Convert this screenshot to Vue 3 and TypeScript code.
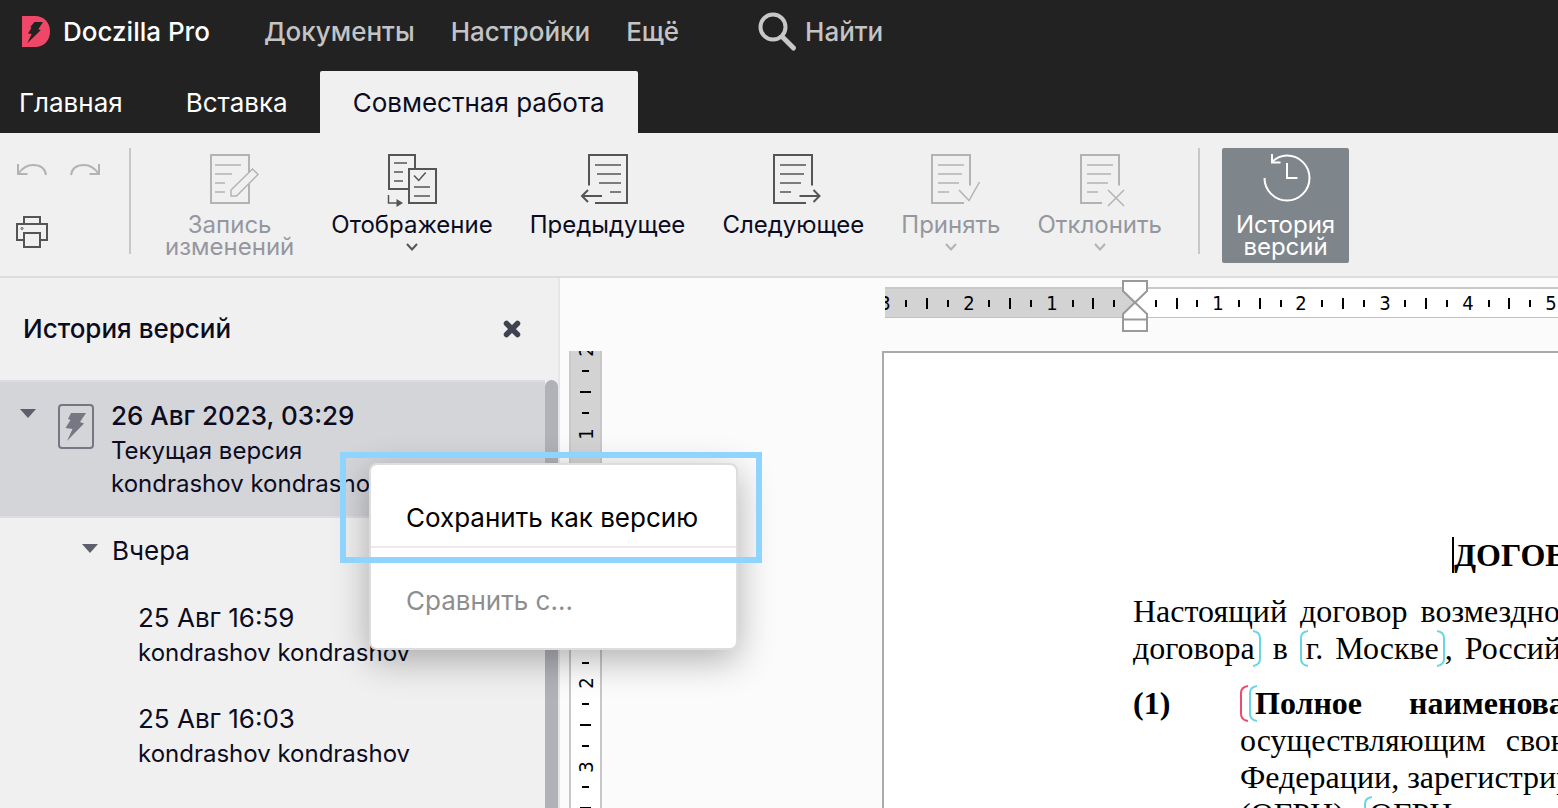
<script setup lang="ts">
import { ref } from 'vue'

interface Tool {
  id: string
  label: string[]
  disabled?: boolean
  menu?: boolean
}

interface Tick {
  pos: number
  long: boolean
}

const nav: string[] = ['Документы', 'Настройки', 'Ещё']
const tabs: string[] = ['Главная', 'Вставка', 'Совместная работа']
const activeTab = ref('Совместная работа')

const tools: Tool[] = [
  { id: 'record', label: ['Запись', 'изменений'], disabled: true },
  { id: 'display', label: ['Отображение'], menu: true },
  { id: 'prev', label: ['Предыдущее'] },
  { id: 'next', label: ['Следующее'] },
  { id: 'accept', label: ['Принять'], disabled: true, menu: true },
  { id: 'reject', label: ['Отклонить'], disabled: true, menu: true },
]

const versions = [
  { date: '25 Авг 16:59', author: 'kondrashov kondrashov' },
  { date: '25 Авг 16:03', author: 'kondrashov kondrashov' },
]

const CM = 83.2

function makeTicks(origin: number, from: number, to: number): Tick[] {
  const out: Tick[] = []
  for (let q = from * 4; q <= to * 4; q++) {
    if (q % 4 !== 0) out.push({ pos: Math.round(origin + (q * CM) / 4), long: q % 2 === 0 })
  }
  return out
}

function makeLabels(origin: number, from: number, to: number) {
  const out: { pos: number; text: string }[] = []
  for (let n = from; n <= to; n++) {
    if (n !== 0) out.push({ pos: Math.round(origin + n * CM), text: String(Math.abs(n)) })
  }
  return out
}

const hOrigin = 250
const vOrigin = 166
const hTicks = makeTicks(hOrigin, -3, 5)
const hLabels = makeLabels(hOrigin, -3, 5)
const vTicks = makeTicks(vOrigin, -2, 4)
const vLabels = makeLabels(vOrigin, -2, 3)
</script>

<template>
  <div class="app">
    <header class="top">
      <div class="top-row">
        <a class="brand" href="#">
          <svg class="logo" viewBox="0 0 28 31" aria-hidden="true">
            <path d="M0 0H13C22 0 28 6.500 28 15.500S22 31 13 31H0Z" fill="#ee4767" />
            <path d="M12.500 6H21L16.300 13.300L18.700 14.300L5.300 27.300L9.700 18L6 17.500L9.500 11.700L8.300 11Z" fill="#222" />
          </svg>
          <span>Doczilla Pro</span>
        </a>
        <nav class="nav">
          <a v-for="n in nav" :key="n" href="#">{{ n }}</a>
        </nav>
        <button class="search" type="button">
          <svg viewBox="0 0 40 40" aria-hidden="true">
            <circle cx="15" cy="15" r="12.500" fill="none" stroke="#c8c8c8" stroke-width="4" />
            <path d="M24.500 25L35.500 36" stroke="#c8c8c8" stroke-width="5" stroke-linecap="round" />
          </svg>
          <span>Найти</span>
        </button>
      </div>
      <div class="tabs">
        <button
          v-for="t in tabs"
          :key="t"
          type="button"
          class="tab"
          :class="{ active: t === activeTab }"
          @click="activeTab = t"
        >{{ t }}</button>
      </div>
    </header>

    <div class="toolbar">
      <div class="quick">
        <div class="quick-row">
          <button type="button" aria-label="Отменить" disabled>
            <svg width="32" height="14" viewBox="0 0 32 14" fill="none" stroke="#b3b3b3" stroke-width="2">
              <path d="M2 1V11H11.500M2 11C7 4 12 2 17 2C24 2 29 5 30 12" />
            </svg>
          </button>
          <button type="button" aria-label="Повторить" disabled>
            <svg width="32" height="14" viewBox="0 0 32 14" fill="none" stroke="#b3b3b3" stroke-width="2">
              <path d="M30 1V11H20.500M30 11C25 4 20 2 15 2C8 2 3 5 2 12" />
            </svg>
          </button>
        </div>
        <button type="button" aria-label="Печать">
          <svg width="32" height="32" viewBox="0 0 32 32" fill="none" stroke="#555" stroke-width="2">
            <path d="M8 8V1H24V8M8 24H1V8H31V24H24" />
            <path d="M8 17H24V31H8Z" />
            <circle cx="6" cy="12.500" r="1" stroke-width="1" />
          </svg>
        </button>
      </div>
      <div class="divider"></div>
      <div class="tools">
        <button v-for="t in tools" :key="t.id" type="button" class="tool" :disabled="t.disabled">
          <svg class="tool-icon" viewBox="0 0 56 56" fill="none" stroke="currentColor" stroke-width="2" aria-hidden="true">
            <template v-if="t.id === 'record'">
              <path d="M9 3H47V51H9Z" />
              <path class="thin" d="M13 13H39M13 22H30M13 31H23M13 40H23" />
              <path d="M29 44V38L50.500 17L56 22.500L34.500 44Z" fill="#f0f0f0" stroke-width="1.500" />
            </template>
            <template v-else-if="t.id === 'display'">
              <path d="M24 37H5V3H31V16" />
              <path d="M25 17H52V51H25Z" />
              <path class="thin" d="M10 11H23M10 20H19M10 29H19M30 35H46M30 44H46M30 23.500L34.700 28.500L41.700 20.500" />
              <path class="thin" d="M4.500 43V51H13" />
              <path d="M12.500 47L19 51L12.500 55Z" fill="currentColor" stroke="none" />
            </template>
            <template v-else-if="t.id === 'prev'">
              <path d="M9 33.500V3H47V51H15" />
              <path class="thin" d="M15 13H41M17 22H41M19 31H41M30 40H41" />
              <path d="M22 44H2M8 38L2 44L8 50" />
            </template>
            <template v-else>
              <path v-if="t.id === 'reject'" d="M47 33.500V3H9V51H30" />
              <path v-else d="M47 33.500V3H9V51H41" />
              <path class="thin" d="M15 13H41M15 22H39M15 31H36M15 40H26" />
              <path v-if="t.id === 'next'" d="M34.500 44H54.500M48.500 38L54.500 44L48.500 50" />
              <path v-if="t.id === 'accept'" class="thin" d="M36 38L46 48.500L56.500 30" />
              <path v-if="t.id === 'reject'" class="thin" d="M36 38L52 54M52 38L36 54" />
            </template>
          </svg>
          <span class="tool-label"><span v-for="l in t.label" :key="l">{{ l }}</span></span>
          <svg v-if="t.menu" class="chevron" viewBox="0 0 12 8" fill="none" stroke="currentColor" stroke-width="2" aria-hidden="true">
            <path d="M1 1L6 6.500L11 1" />
          </svg>
        </button>
      </div>
      <div class="divider"></div>
      <button type="button" class="history" aria-pressed="true">
        <svg class="tool-icon" viewBox="0 0 56 56" fill="none" stroke="#fff" stroke-width="2" aria-hidden="true">
          <path d="M6.500 26A22.500 22.500 0 1 0 29 3.500C23 3.500 18 6 14 10" />
          <path d="M14 2V10.500H22.500M29 11V26H39.500" />
        </svg>
        <span class="tool-label"><span>История</span><span>версий</span></span>
      </button>
    </div>

    <div class="workspace">
      <aside class="sidebar">
        <div class="side-head">
          <h2>История версий</h2>
          <button type="button" aria-label="Закрыть">
            <svg width="18" height="18" viewBox="0 0 18 18" stroke="#3f4250" stroke-width="5.500" stroke-linecap="round" aria-hidden="true">
              <path d="M3.500 3.500L14.500 14.500M14.500 3.500L3.500 14.500" />
            </svg>
          </button>
        </div>
        <div class="side-body">
          <div class="list">
            <div class="current">
              <svg class="caret" viewBox="0 0 16 9" aria-hidden="true"><path d="M0 0H16L8 9Z" /></svg>
              <svg class="doc-icon" viewBox="0 0 36 45" aria-hidden="true">
                <rect x="1" y="1" width="34" height="43" rx="3" fill="none" stroke="#777784" stroke-width="2" />
                <path d="M13 9H28L22 18L26 19.500L9 37L14.500 25L7.500 24L12.500 16L10 15Z" fill="#777784" />
              </svg>
              <div class="lines">
                <strong>26 Авг 2023, 03:29</strong>
                <span>Текущая версия</span>
                <span>kondrashov kondrashov</span>
              </div>
            </div>
            <div class="group">
              <svg class="caret" viewBox="0 0 16 9" aria-hidden="true"><path d="M0 0H16L8 9Z" /></svg>
              <span>Вчера</span>
            </div>
            <div v-for="v in versions" :key="v.date" class="version">
              <b>{{ v.date }}</b>
              <span>{{ v.author }}</span>
            </div>
          </div>
          <div class="scrollbar"></div>
        </div>
      </aside>

      <main class="canvas">
        <div class="hruler">
          <svg class="hscale">
            <rect x="0" y="0" :width="hOrigin" height="31" fill="#d3d3d3" />
            <rect x="0" y="0" width="100%" height="2" fill="#c8c8c8" />
            <rect x="0" y="30" width="100%" height="1" fill="#c0c0c0" />
            <rect
              v-for="t in hTicks"
              :key="t.pos"
              :x="t.pos - 1"
              :y="t.long ? 11 : 13"
              width="2"
              :height="t.long ? 11 : 7"
            />
            <text v-for="l in hLabels" :key="l.pos" :x="l.pos" y="23">{{ l.text }}</text>
          </svg>
          <svg class="indent" viewBox="0 0 26 52" fill="#fff" stroke="#999" stroke-width="2" aria-hidden="true">
            <path d="M1 1H25V11L13 22.500L1 11Z" />
            <path d="M13 22.500L25 34V51H1V34Z" />
            <path d="M1 39.500H25" />
          </svg>
        </div>
        <div class="sheet-row">
          <svg class="vruler">
            <rect x="0" y="0" width="33" :height="vOrigin" fill="#d3d3d3" />
            <rect x="0" y="0" width="2" height="100%" fill="#c8c8c8" />
            <rect x="31" y="0" width="2" height="100%" fill="#c8c8c8" />
            <rect
              v-for="t in vTicks"
              :key="t.pos"
              :x="t.long ? 11 : 13"
              :y="t.pos - 1"
              :width="t.long ? 11 : 7"
              height="2"
            />
            <text v-for="l in vLabels" :key="l.pos" x="0" y="0" :transform="`translate(24 ${l.pos}) rotate(-90)`">{{ l.text }}</text>
          </svg>
          <article class="page">
            <h1><i class="cursor"></i>ДОГОВОР</h1>
            <p class="line g13"><span>Настоящий</span><span>договор</span><span>возмездного</span></p>
            <p class="line g12">
              <span>договора<svg class="br close" viewBox="0 0 8 37"><path d="M0 1Q7 2 7 8V29Q7 35 0 36" /></svg></span>
              <span>в</span>
              <span><svg class="br" viewBox="0 0 8 37"><path d="M8 1Q1 2 1 8V29Q1 35 8 36" /></svg>г.</span>
              <span>Москве<svg class="br close" viewBox="0 0 8 37"><path d="M0 1Q7 2 7 8V29Q7 35 0 36" /></svg>,</span>
              <span>Российской</span>
            </p>
            <div class="clause">
              <b class="num">(1)</b>
              <div class="clause-text">
                <p class="line g47 bold">
                  <span><svg class="br red" viewBox="0 0 8 37"><path d="M8 1Q1 2 1 8V29Q1 35 8 36" /></svg><svg class="br" viewBox="0 0 8 37"><path d="M8 1Q1 2 1 8V29Q1 35 8 36" /></svg>Полное</span>
                  <span>наименование</span>
                </p>
                <p class="line g20"><span>осуществляющим</span><span>свою</span></p>
                <p class="line g8"><span>Федерации,</span><span>зарегистрированным</span></p>
                <p class="line g20">
                  <span>(ОГРН)</span>
                  <span><svg class="br" viewBox="0 0 8 37"><path d="M8 1Q1 2 1 8V29Q1 35 8 36" /></svg>ОГРН</span>
                </p>
              </div>
            </div>
          </article>
        </div>
      </main>

      <div class="context" role="menu">
        <button type="button" role="menuitem">Сохранить как версию</button>
        <hr />
        <button type="button" role="menuitem" disabled>Сравнить с...</button>
      </div>
      <div class="highlight"></div>
    </div>
  </div>
</template>

<style>
body {
  margin: 0;
  overflow: hidden;
}
</style>

<style scoped>
.app {
  display: flex;
  flex-direction: column;
  height: 100vh;
  overflow: hidden;
  font-family: Inter, "Liberation Sans", sans-serif;
  font-size: 26px;
  color: #0b0c22;
  background: #fbfbfb;
}
button {
  font: inherit;
  color: inherit;
  background: none;
  border: 0;
  padding: 0;
  margin: 0;
}
a {
  color: inherit;
  text-decoration: none;
}
svg {
  display: block;
  flex: none;
}
.top {
  background: #222;
  color: #fff;
}
.top-row {
  display: flex;
  align-items: center;
  height: 71px;
  box-sizing: border-box;
  padding: 0 22px 8px;
  font-weight: 500;
}
.brand {
  display: flex;
  align-items: center;
  gap: 13px;
}
.logo {
  width: 28px;
  height: 31px;
}
.nav {
  display: flex;
  gap: 36px;
  margin-left: 54px;
  color: #c4c4c4;
}
.search {
  display: flex;
  align-items: center;
  gap: 7px;
  margin-left: 79px;
  color: #c4c4c4;
}
.search svg {
  width: 40px;
  height: 40px;
}
.tabs {
  display: flex;
  gap: 1px;
  height: 62px;
}
.tab {
  padding: 0 31px;
}
.tab:first-child {
  padding-left: 19px;
}
.tab.active {
  padding: 0 33px;
  background: #f0f0f0;
  color: #0b0c22;
  border-radius: 2px 2px 0 0;
}
.toolbar {
  display: flex;
  align-items: flex-start;
  height: 128px;
  padding-top: 15px;
  background: #f0f0f0;
  border-bottom: 2px solid #ddd;
}
.quick {
  display: flex;
  flex-direction: column;
  gap: 39px;
  padding: 15px 28px 0 16px;
}
.quick-row {
  display: flex;
  gap: 21px;
}
.quick button {
  align-self: flex-start;
}
.divider {
  width: 2px;
  height: 106px;
  background: #c8c8c8;
}
.tools {
  display: flex;
  gap: 37px;
  margin: 0 36px 0 34px;
}
.tool,
.history {
  display: flex;
  flex-direction: column;
  align-items: center;
  padding-top: 4px;
  font-size: 24px;
}
.tool-icon {
  width: 56px;
  height: 56px;
  overflow: visible;
  color: #555;
}
.thin {
  stroke-width: 1.5px;
}
.tool-label {
  display: flex;
  flex-direction: column;
  line-height: 22px;
  margin-top: 6px;
}
.tool:disabled {
  color: #95979f;
}
.tool:disabled .tool-icon,
.tool:disabled .chevron {
  color: #b3b3b3;
}
.chevron {
  width: 12px;
  height: 8px;
  margin-top: 7px;
  color: #555;
}
.history {
  margin-left: 22px;
  padding: 4px 14px 5px;
  background: #7f868b;
  color: #fff;
  border-radius: 2px;
}
.workspace {
  position: relative;
  display: flex;
  flex: 1;
  min-height: 0;
}
.sidebar {
  display: flex;
  flex-direction: column;
  flex: none;
  width: 558px;
  background: #f0f0f0;
  border-right: 2px solid #e6e6e8;
}
.side-head {
  display: flex;
  align-items: center;
  justify-content: space-between;
  height: 102px;
  padding: 0 37px 0 23px;
}
.side-head h2 {
  margin: 0;
  font-size: 26px;
  line-height: 36px;
  font-weight: 500;
}
.side-body {
  display: flex;
  flex: 1;
  min-height: 0;
}
.list {
  flex: 1;
  min-width: 0;
}
.scrollbar {
  width: 13px;
  background: #b1b2b8;
  border-radius: 7px 7px 0 0;
}
.current {
  display: flex;
  align-items: flex-start;
  padding: 16px 0 16px 20px;
  background: #d4d5d9;
  border-top: 2px solid #dcdde0;
  border-bottom: 2px solid #dcdde0;
}
.caret {
  width: 16px;
  height: 9px;
  fill: #5d5f6c;
}
.current .caret {
  margin-top: 11px;
}
.doc-icon {
  width: 36px;
  height: 45px;
  margin: 6px 17px 0 22px;
}
.lines,
.version {
  display: flex;
  flex-direction: column;
  font-size: 24px;
  line-height: 33px;
  white-space: nowrap;
}
.lines strong,
.version b {
  font-size: 26px;
  line-height: 36px;
  font-weight: 500;
}
.version b {
  font-weight: 400;
}
.group {
  display: flex;
  align-items: center;
  gap: 14px;
  padding: 15px 0 31px 82px;
  line-height: 36px;
}
.group .caret {
  margin-bottom: 6px;
}
.version {
  padding: 0 0 32px 138px;
}
.canvas {
  display: flex;
  flex-direction: column;
  flex: 1;
  min-width: 0;
  overflow: hidden;
}
.hruler {
  position: relative;
  margin: 9px 0 33px 325px;
  background: #fff;
}
.hscale {
  width: 100%;
  height: 31px;
  overflow: hidden;
}
.hscale text,
.vruler text {
  font-family: "DejaVu Sans Condensed", "DejaVu Sans", sans-serif;
  font-size: 20px;
  text-anchor: middle;
}
.indent {
  position: absolute;
  left: 237px;
  top: -7px;
  width: 26px;
  height: 52px;
}
.sheet-row {
  display: flex;
  flex: 1;
  min-height: 0;
  gap: 280px;
  padding-left: 9px;
}
.vruler {
  width: 33px;
  height: 100%;
  background: #fff;
}
.page {
  flex: 1;
  min-width: 0;
  overflow: hidden;
  padding: 184px 0 0 249px;
  background: #fff;
  border-left: 2px solid #aaa;
  border-top: 2px solid #aaa;
  font-family: "Liberation Serif", serif;
  font-size: 32px;
  line-height: 37px;
  color: #000;
  white-space: nowrap;
}
.page h1 {
  display: flex;
  margin: 0 0 19px 319px;
  font-size: 32px;
}
.cursor {
  flex: none;
  width: 2px;
  height: 36px;
  background: #000;
}
.line {
  display: flex;
  margin: 0;
}
.line > span {
  display: flex;
  flex: none;
}
.g8 { gap: 8px; }
.g12 { gap: 12px; }
.g13 { gap: 13px; }
.g20 { gap: 20px; }
.g47 { gap: 47px; }
.bold {
  font-weight: 700;
}
.br {
  width: 8px;
  height: 37px;
  margin-right: -2px;
  fill: none;
  stroke: #6bd5e3;
  stroke-width: 2px;
}
.br.close {
  margin: 0 0 0 -2px;
}
.br.red {
  margin-right: 1px;
  stroke: #ec4b6c;
}
.clause {
  display: flex;
  margin-top: 18px;
}
.num {
  flex: none;
  width: 107px;
}
.context {
  position: absolute;
  left: 369px;
  top: 185px;
  display: flex;
  flex-direction: column;
  box-sizing: border-box;
  width: 369px;
  background: #fff;
  border: 2px solid #ddd;
  border-radius: 8px;
  box-shadow: 0 10px 36px rgba(0, 0, 0, 0.3);
  color: #000;
}
.context button {
  padding: 36px 35px 12px;
  line-height: 33px;
  text-align: left;
}
.context button:last-child {
  padding-bottom: 31px;
}
.context button:disabled {
  color: #8e8e8e;
}
.context hr {
  width: 100%;
  height: 2px;
  margin: 0;
  border: 0;
  background: #ebebeb;
}
.highlight {
  position: absolute;
  left: 340px;
  top: 174px;
  box-sizing: border-box;
  width: 422px;
  height: 111px;
  border: 6px solid #8fd3ff;
  pointer-events: none;
}
</style>
